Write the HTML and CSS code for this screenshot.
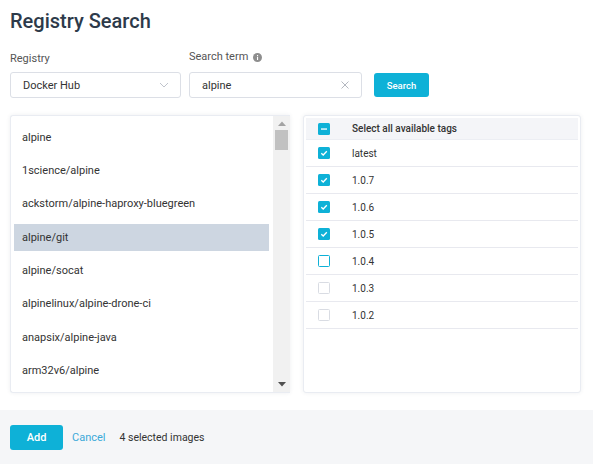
FILE: index.html
```html
<!DOCTYPE html>
<html>
<head>
<meta charset="utf-8">
<link rel="stylesheet" href="styles.css">
</head>
<body>
<div class="page">
  <h1 class="title">Registry Search</h1>
  <div class="form-row">
    <div class="field field-registry">
      <label class="label">Registry</label>
      <div class="control">
        <span class="control-text">Docker Hub</span>
        <svg class="chevron" width="10" height="6" viewBox="0 0 10 6"><path d="M1 1l4 4 4-4" fill="none" stroke="#c0c4cc" stroke-width="1"/></svg>
      </div>
    </div>
    <div class="field field-term">
      <label class="label label-info">Search term
        <svg class="info" width="9" height="9" viewBox="0 0 9 9"><circle cx="4.5" cy="4.5" r="4.5" fill="#8e8e8e"/><rect x="4" y="3.8" width="1.1" height="3.2" fill="#fff"/><rect x="4" y="2" width="1.1" height="1.1" fill="#fff"/></svg>
      </label>
      <div class="control">
        <span class="control-text">alpine</span>
        <svg class="clear" width="8" height="8" viewBox="0 0 8 8"><path d="M0.5 0.5l7 7M7.5 0.5l-7 7" stroke="#b4b8c0" stroke-width="1"/></svg>
      </div>
    </div>
    <button class="btn btn-search">Search</button>
  </div>

  <div class="panels">
    <div class="panel panel-list">
      <ul class="repo-list">
        <li class="repo">alpine</li>
        <li class="repo">1science/alpine</li>
        <li class="repo">ackstorm/alpine-haproxy-bluegreen</li>
        <li class="repo repo-selected">alpine/git</li>
        <li class="repo">alpine/socat</li>
        <li class="repo">alpinelinux/alpine-drone-ci</li>
        <li class="repo">anapsix/alpine-java</li>
        <li class="repo">arm32v6/alpine</li>
      </ul>
      <div class="scrollbar">
        <svg class="arrow" width="8" height="5" viewBox="0 0 8 5"><path d="M0 5L4 0.5 8 5z" fill="#a3a3a3"/></svg>
        <div class="thumb"></div>
        <div class="track"></div>
        <svg class="arrow" width="8" height="5" viewBox="0 0 8 5"><path d="M0 0L4 4.5 8 0z" fill="#505050"/></svg>
      </div>
    </div>

    <div class="panel panel-tags">
      <div class="tag-row tag-head">
        <span class="cb cb-on"><svg width="12" height="12" viewBox="0 0 12 12"><rect x="3" y="5.4" width="6" height="1.3" fill="#fff"/></svg></span>
        <span class="tag-name">Select all available tags</span>
      </div>
      <div class="tag-row"><span class="cb cb-on"><svg width="12" height="12" viewBox="0 0 12 12"><path d="M3.3 6.2l1.9 1.8 3.6-3.8" fill="none" stroke="#fff" stroke-width="1.3"/></svg></span><span class="tag-name">latest</span></div>
      <div class="tag-row"><span class="cb cb-on"><svg width="12" height="12" viewBox="0 0 12 12"><path d="M3.3 6.2l1.9 1.8 3.6-3.8" fill="none" stroke="#fff" stroke-width="1.3"/></svg></span><span class="tag-name">1.0.7</span></div>
      <div class="tag-row"><span class="cb cb-on"><svg width="12" height="12" viewBox="0 0 12 12"><path d="M3.3 6.2l1.9 1.8 3.6-3.8" fill="none" stroke="#fff" stroke-width="1.3"/></svg></span><span class="tag-name">1.0.6</span></div>
      <div class="tag-row"><span class="cb cb-on"><svg width="12" height="12" viewBox="0 0 12 12"><path d="M3.3 6.2l1.9 1.8 3.6-3.8" fill="none" stroke="#fff" stroke-width="1.3"/></svg></span><span class="tag-name">1.0.5</span></div>
      <div class="tag-row"><span class="cb cb-focus"></span><span class="tag-name">1.0.4</span></div>
      <div class="tag-row"><span class="cb cb-off"></span><span class="tag-name">1.0.3</span></div>
      <div class="tag-row"><span class="cb cb-off"></span><span class="tag-name">1.0.2</span></div>
    </div>
  </div>
</div>
<div class="footer">
  <button class="btn btn-add">Add</button>
  <a class="cancel">Cancel</a>
  <span class="count">4 selected images</span>
</div>
</body>
</html>
```

FILE: styles.css
```css
* { box-sizing: border-box; }
html, body { margin: 0; padding: 0; background: #fff; }
body {
  font-family: Roboto, "Liberation Sans", sans-serif;
  color: #333;
  width: 593px;
  height: 464px;
  overflow: hidden;
}
.page { padding: 9px 10px 0 10px; }
.title {
  margin: 0;
  font-size: 20px;
  line-height: 24px;
  font-weight: 500;
  color: #2d3a4a;
}
.form-row {
  display: flex;
  align-items: flex-end;
  margin-top: 19px;
}
.field { display: flex; flex-direction: column; }
.field-registry { width: 171px; margin-right: 8px; }
.field-term { width: 173px; margin-right: 12px; }
.label {
  font-size: 11px;
  line-height: 14px;
  color: #555;
  margin-bottom: 6px;
  display: flex;
  align-items: center;
}
.label-info { margin-top: -2px; margin-bottom: 8px; }
.info { margin-left: 5px; }
.control {
  height: 26px;
  border: 1px solid #dcdfe6;
  border-radius: 3px;
  display: flex;
  align-items: center;
  justify-content: space-between;
  padding: 0 11px 0 12px;
  font-size: 11px;
  color: #333;
}
.field-term .control { padding-right: 12px; }
.btn {
  border: none;
  background: #0eb1d7;
  color: #fff;
  font-family: Roboto, "Liberation Sans", sans-serif;
  font-weight: 500;
  border-radius: 3px;
  cursor: pointer;
}
.btn-search {
  width: 55px;
  height: 24px;
  font-size: 9.5px;
  margin-bottom: 1px;
}
.panels {
  display: flex;
  margin-top: 17px;
  height: 278px;
}
.panel {
  background: #fff;
  border: 1px solid #e9ecf2;
  border-radius: 3px;
  box-shadow: 0 0 4px rgba(40, 50, 80, 0.08);
}
.panel-list {
  width: 280px;
  margin-right: 13px;
  display: flex;
  overflow: hidden;
  border-right: none;
  border-radius: 3px 0 0 3px;
}
.repo-list {
  list-style: none;
  margin: 0;
  padding: 7.5px 4px 0 3px;
  flex: 1;
  display: flex;
  flex-direction: column;
  gap: 6.4px;
  overflow: hidden;
}
.repo {
  height: 27px;
  flex: none;
  line-height: 27px;
  padding-left: 8px;
  font-size: 11px;
  color: #333;
}
.repo-selected { background: #cdd6e1; }
.scrollbar {
  width: 17px;
  background: #f1f1f1;
  display: flex;
  flex-direction: column;
  align-items: center;
  padding: 5px 0 5px;
}
.arrow { flex: none; }
.thumb {
  width: 13px;
  height: 20px;
  background: #c1c1c1;
  margin-top: 4px;
}
.track { flex: 1; }
.panel-tags {
  width: 278px;
  padding: 2px;
}
.tag-row {
  display: flex;
  align-items: center;
  height: 27px;
  border-bottom: 1px solid #e8e9ef;
  font-size: 10px;
  color: #333;
}
.tag-head {
  height: 22px;
  background: #f4f5f8;
  font-weight: 500;
  border-bottom-color: #eceef3;
}
.cb {
  width: 12px;
  height: 12px;
  margin-left: 12px;
  margin-right: 22px;
  border-radius: 1.5px;
  flex: none;
  display: flex;
}
.cb-on { background: #0eb1d7; }
.cb-focus { border: 1px solid #0eb1d7; }
.cb-off { border: 1px solid #d9dce3; }
.footer {
  margin-top: 17px;
  height: 54px;
  background: #f5f6f8;
  display: flex;
  align-items: center;
  padding: 0 10px;
}
.btn-add {
  width: 53px;
  height: 25px;
  font-size: 11px;
  margin-right: 9px;
}
.cancel {
  font-size: 11px;
  color: #3ba9d9;
  margin-right: 14px;
}
.count {
  font-size: 10.5px;
  color: #333;
}
```
